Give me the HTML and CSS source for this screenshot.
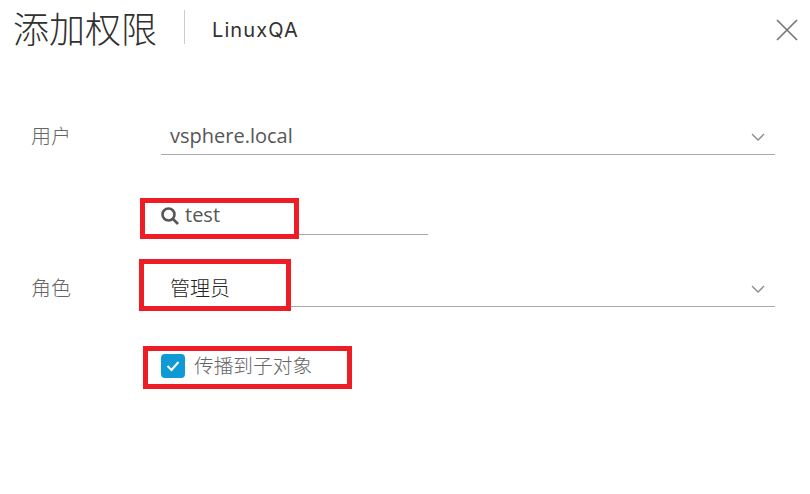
FILE: index.html
```html
<!DOCTYPE html>
<html lang="zh-CN">
<head>
  <meta charset="UTF-8" />
  <title>添加权限</title>
  <link rel="stylesheet" href="styles.css">
</head>
<body>
  <div class="dialog">
    <header class="dialog-header">
      <h1>添加权限</h1>
      <span class="divider"></span>
      <span class="subject">LinuxQA</span>
      <svg class="close" width="24" height="24" viewBox="0 0 24 24"><path d="M2 2 L22 22 M22 2 L2 22" /></svg>
    </header>

    <div class="row user-row">
      <label>用户</label>
      <div class="select">
        <span>vsphere.local</span>
        <svg class="chevron" width="14" height="8" viewBox="0 0 14 8"><path d="M1 1 L7 7 L13 1" /></svg>
      </div>
    </div>

    <div class="search">
      <svg class="search-icon" width="20" height="20" viewBox="0 0 20 20"><circle cx="8.5" cy="8.5" r="6" /><path d="M13 13 L18 18" /></svg>
      <span>test</span>
    </div>

    <div class="row role-row">
      <label>角色</label>
      <div class="select">
        <span class="role-name">管理员</span>
        <svg class="chevron" width="14" height="8" viewBox="0 0 14 8"><path d="M1 1 L7 7 L13 1" /></svg>
      </div>
    </div>

    <div class="check">
      <span class="box">
        <svg width="16" height="14" viewBox="0 0 16 14"><path d="M2.5 7 L6.5 11 L13.5 3" /></svg>
      </span>
      <span class="check-label">传播到子对象</span>
    </div>

    <!-- red annotation boxes -->
    <div class="mark mark-search"></div>
    <div class="mark mark-role"></div>
    <div class="mark mark-check"></div>
  </div>
</body>
</html>
```

FILE: styles.css
```css
* {
  box-sizing: border-box;
  margin: 0;
  padding: 0;
}
html, body {
  background: #fff;
  overflow: hidden;
}
body {
  width: 810px;
  height: 494px;
  font-family: 'Open Sans', 'Noto Sans CJK SC', sans-serif;
  color: #565656;
}
.dialog {
  position: relative;
  height: 494px;
  padding: 0 35px 0 13px;
}
.dialog-header {
  display: flex;
  align-items: center;
  height: 54px;
}
.dialog-header h1 {
  font-family: 'Noto Sans CJK SC', sans-serif;
  font-size: 36px;
  font-weight: 300;
  line-height: 54px;
  color: #313131;
  width: 144px;
  white-space: nowrap;
}
.divider {
  width: 1px;
  height: 34px;
  margin: 0 27px;
  background: #ccc;
}
.subject {
  margin-top: 5px;
  font-family: 'Inter', sans-serif;
  font-size: 20px;
  letter-spacing: 1.1px;
  color: #313131;
}
.close {
  margin-left: auto;
  margin-right: -24px;
  margin-top: 6px;
}
.close path {
  fill: none;
  stroke: #777;
  stroke-width: 1.7;
}
.row {
  display: flex;
  padding-left: 18px;
}
.row label {
  width: 130px;
  font-size: 20px;
  font-weight: 300;
  line-height: 34px;
  color: #666;
  font-family: 'Noto Sans CJK SC', sans-serif;
}
.select {
  flex: 1;
  display: flex;
  align-items: center;
  justify-content: space-between;
  height: 36px;
  padding: 0 10px 2px 9px;
  border-bottom: 1px solid #aaa;
  font-size: 20px;
  color: #565656;
}
.user-row {
  margin-top: 65px;
}
.role-row {
  margin-top: 36px;
}
.role-name {
  font-family: 'Noto Sans CJK SC', sans-serif;
  font-size: 20px;
  font-weight: 300;
  color: #222;
}
.chevron {
  margin-top: 2px;
}
.chevron path {
  fill: none;
  stroke: #888;
  stroke-width: 1.3;
}
.search {
  display: flex;
  align-items: center;
  gap: 5px;
  width: 267px;
  height: 36px;
  margin: 44px 0 0 148px;
  padding: 0 0 5px 0;
  border-bottom: 1px solid #aaa;
  font-size: 20px;
  color: #565656;
}
.search-icon {
  margin: 3px 0 0 -1px;
}
.search-icon circle, .search-icon path {
  fill: none;
  stroke: #565656;
  stroke-width: 2.6;
}
.check {
  display: flex;
  align-items: center;
  gap: 9px;
  margin: 45px 0 0 148px;
  font-family: 'Noto Sans CJK SC', sans-serif;
  font-size: 19.7px;
  font-weight: 300;
  color: #666;
}
.check-label {
  margin-top: -2px;
}
.box {
  display: flex;
  align-items: center;
  justify-content: center;
  width: 24px;
  height: 24px;
  border-radius: 4px;
  background: #0f9ad6;
}
.box path {
  fill: none;
  stroke: #fff;
  stroke-width: 2;
}
.mark {
  position: absolute;
  border: 5px solid #ee1c25;
}
.mark-search {
  left: 140px;
  top: 198px;
  width: 159px;
  height: 41px;
}
.mark-role {
  left: 139px;
  top: 259px;
  width: 152px;
  height: 52px;
}
.mark-check {
  left: 143px;
  top: 346px;
  width: 209px;
  height: 43px;
}
```
